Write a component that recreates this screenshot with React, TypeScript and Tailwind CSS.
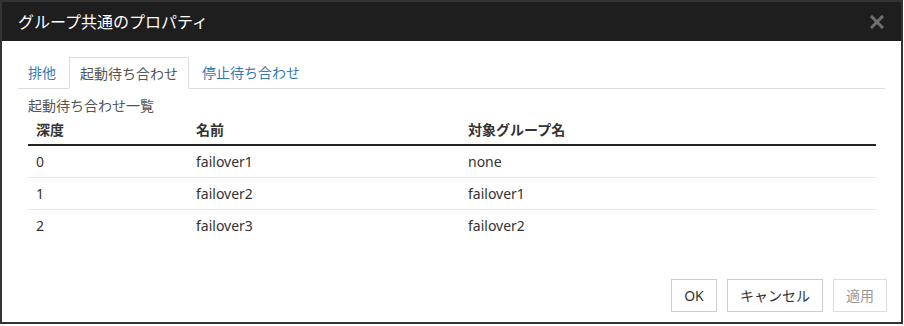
import React from 'react';

const rows = [
  { depth: '0', name: 'failover1', target: 'none' },
  { depth: '1', name: 'failover2', target: 'failover1' },
  { depth: '2', name: 'failover3', target: 'failover2' },
];

export default function App() {
  return (
    <div className="w-[904px] h-[326px] bg-white font-['Noto_Sans','Noto_Sans_CJK_JP',sans-serif]">
      <div className="w-[903px] h-[324px] border-2 border-[#333] flex flex-col bg-white">
        {/* Header */}
        <div className="h-[39px] bg-[#1e1e1e] flex items-center justify-between pl-[16px] pr-[17px]">
          <h1 className="text-[16px] text-white leading-none">グループ共通のプロパティ</h1>
          <svg width="14" height="14" viewBox="0 0 14 14" className="text-[#6f6f6f]">
            <path d="M2 2 L12 12 M12 2 L2 12" stroke="currentColor" strokeWidth="3" strokeLinecap="square" />
          </svg>
        </div>

        {/* Body */}
        <div className="px-[16px] pt-[16px]">
          {/* Tabs */}
          <div className="flex gap-[3px] border-b border-[#ddd] text-[14px]">
            <div className="h-[31px] px-[10px] flex items-center text-[#337ab7]">排他</div>
            <div className="h-[32px] px-[10px] flex items-center text-[#555] bg-white border border-[#ddd] border-b-white -mb-px">
              起動待ち合わせ
            </div>
            <div className="h-[31px] px-[10px] flex items-center text-[#337ab7]">停止待ち合わせ</div>
          </div>

          <div className="mx-[10px] mt-[8px] text-[14px] text-[#555] leading-[18px]">起動待ち合わせ一覧</div>

          <table className="mx-[10px] w-[848px] table-fixed text-[14px] text-[#333] border-collapse">
            <colgroup>
              <col className="w-[160px]" />
              <col className="w-[272px]" />
              <col />
            </colgroup>
            <thead>
              <tr className="border-b-2 border-[#222]">
                <th className="h-[30px] px-[8px] text-left font-bold">深度</th>
                <th className="px-[8px] text-left font-bold">名前</th>
                <th className="px-[8px] text-left font-bold">対象グループ名</th>
              </tr>
            </thead>
            <tbody>
              {rows.map((r, i) => (
                <tr key={i} className={i < rows.length - 1 ? 'border-b border-[#e8e8e8]' : ''}>
                  <td className="h-[32px] px-[8px]">{r.depth}</td>
                  <td className="px-[8px]">{r.name}</td>
                  <td className="px-[8px]">{r.target}</td>
                </tr>
              ))}
            </tbody>
          </table>
        </div>

        {/* Footer */}
        <div className="mt-auto flex justify-end gap-[10px] px-[14px] pb-[10px] text-[14px]">
          <button className="w-[46px] h-[33px] border border-[#ccc] bg-white text-[#333]">OK</button>
          <button className="w-[96px] h-[33px] border border-[#ccc] bg-white text-[#333]">キャンセル</button>
          <button className="w-[54px] h-[33px] border border-[#ddd] bg-white text-[#999]">適用</button>
        </div>
      </div>
    </div>
  );
}
